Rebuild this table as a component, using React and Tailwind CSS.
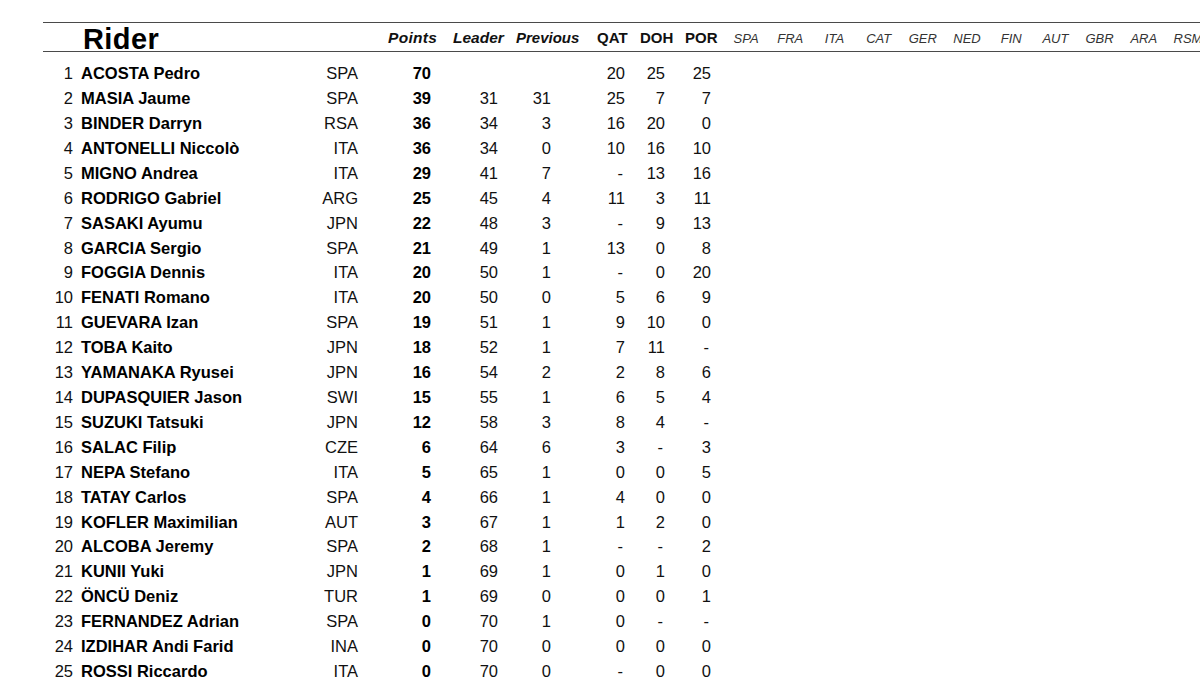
const riders = [
  [1, "ACOSTA Pedro", "SPA", "70", "", "", "20", "25", "25"],
  [2, "MASIA Jaume", "SPA", "39", "31", "31", "25", "7", "7"],
  [3, "BINDER Darryn", "RSA", "36", "34", "3", "16", "20", "0"],
  [4, "ANTONELLI Niccolò", "ITA", "36", "34", "0", "10", "16", "10"],
  [5, "MIGNO Andrea", "ITA", "29", "41", "7", "-", "13", "16"],
  [6, "RODRIGO Gabriel", "ARG", "25", "45", "4", "11", "3", "11"],
  [7, "SASAKI Ayumu", "JPN", "22", "48", "3", "-", "9", "13"],
  [8, "GARCIA Sergio", "SPA", "21", "49", "1", "13", "0", "8"],
  [9, "FOGGIA Dennis", "ITA", "20", "50", "1", "-", "0", "20"],
  [10, "FENATI Romano", "ITA", "20", "50", "0", "5", "6", "9"],
  [11, "GUEVARA Izan", "SPA", "19", "51", "1", "9", "10", "0"],
  [12, "TOBA Kaito", "JPN", "18", "52", "1", "7", "11", "-"],
  [13, "YAMANAKA Ryusei", "JPN", "16", "54", "2", "2", "8", "6"],
  [14, "DUPASQUIER Jason", "SWI", "15", "55", "1", "6", "5", "4"],
  [15, "SUZUKI Tatsuki", "JPN", "12", "58", "3", "8", "4", "-"],
  [16, "SALAC Filip", "CZE", "6", "64", "6", "3", "-", "3"],
  [17, "NEPA Stefano", "ITA", "5", "65", "1", "0", "0", "5"],
  [18, "TATAY Carlos", "SPA", "4", "66", "1", "4", "0", "0"],
  [19, "KOFLER Maximilian", "AUT", "3", "67", "1", "1", "2", "0"],
  [20, "ALCOBA Jeremy", "SPA", "2", "68", "1", "-", "-", "2"],
  [21, "KUNII Yuki", "JPN", "1", "69", "1", "0", "1", "0"],
  [22, "ÖNCÜ Deniz", "TUR", "1", "69", "0", "0", "0", "1"],
  [23, "FERNANDEZ Adrian", "SPA", "0", "70", "1", "0", "-", "-"],
  [24, "IZDIHAR Andi Farid", "INA", "0", "70", "0", "0", "0", "0"],
  [25, "ROSSI Riccardo", "ITA", "0", "70", "0", "-", "0", "0"],
];

const upcoming = ["SPA", "FRA", "ITA", "CAT", "GER", "NED", "FIN", "AUT", "GBR", "ARA", "RSM"];

function Score({ value, width }) {
  // dashes sit roughly where a single digit would
  return (
    <div className={`${width} text-right`}>
      <span className={value === "-" ? "pr-[2px]" : ""}>{value}</span>
    </div>
  );
}

export default function App() {
  return (
    <div className="w-[1200px] h-[690px] overflow-hidden bg-white font-['Liberation_Sans',Arial,sans-serif] text-[#111]">
      <div className="ml-[43px] mt-[22px] w-[1200px]">
        <div className="flex h-[30px] items-end border-y border-[#4a4a4a]">
          <div className="-mb-[3px] w-[345px] pl-[40px] text-[29px] font-bold leading-none tracking-[0.4px] text-black">
            Rider
          </div>
          <div className="mb-[5px] flex h-[16px] items-end text-[15.5px] font-bold italic leading-[16px]">
            <div className="w-[65px] tracking-[0.3px]">Points</div>
            <div className="w-[63px]">Leader</div>
            <div className="w-[81px] text-[15px]">Previous</div>
            <div className="w-[43px] text-[15px] not-italic">QAT</div>
            <div className="w-[45px] text-[15px] not-italic">DOH</div>
            <div className="w-[39px] text-[15px] not-italic">POR</div>
          </div>
          {upcoming.map((r) => (
            <div key={r} className="mb-[6px] w-[44.2px] text-center text-[13px] italic leading-[13px] text-[#333]">
              {r}
            </div>
          ))}
        </div>

        <div className="mt-[9px]">
          {riders.map(([pos, name, nat, pts, leader, prev, qat, doh, por]) => (
            <div key={pos} className="flex h-[24.92px] items-center text-[16.5px] leading-none">
              <div className="w-[30px] text-right">{pos}</div>
              <div className="w-[238px] pl-[8px] font-bold text-black">{name}</div>
              <div className="w-[47px] text-right">{nat}</div>
              <div className="w-[73px] text-right font-bold text-black">{pts}</div>
              <div className="w-[67px] text-right">{leader}</div>
              <Score value={prev} width="w-[53px]" />
              <Score value={qat} width="w-[74px]" />
              <Score value={doh} width="w-[40px]" />
              <Score value={por} width="w-[46px]" />
            </div>
          ))}
        </div>
      </div>
    </div>
  );
}
